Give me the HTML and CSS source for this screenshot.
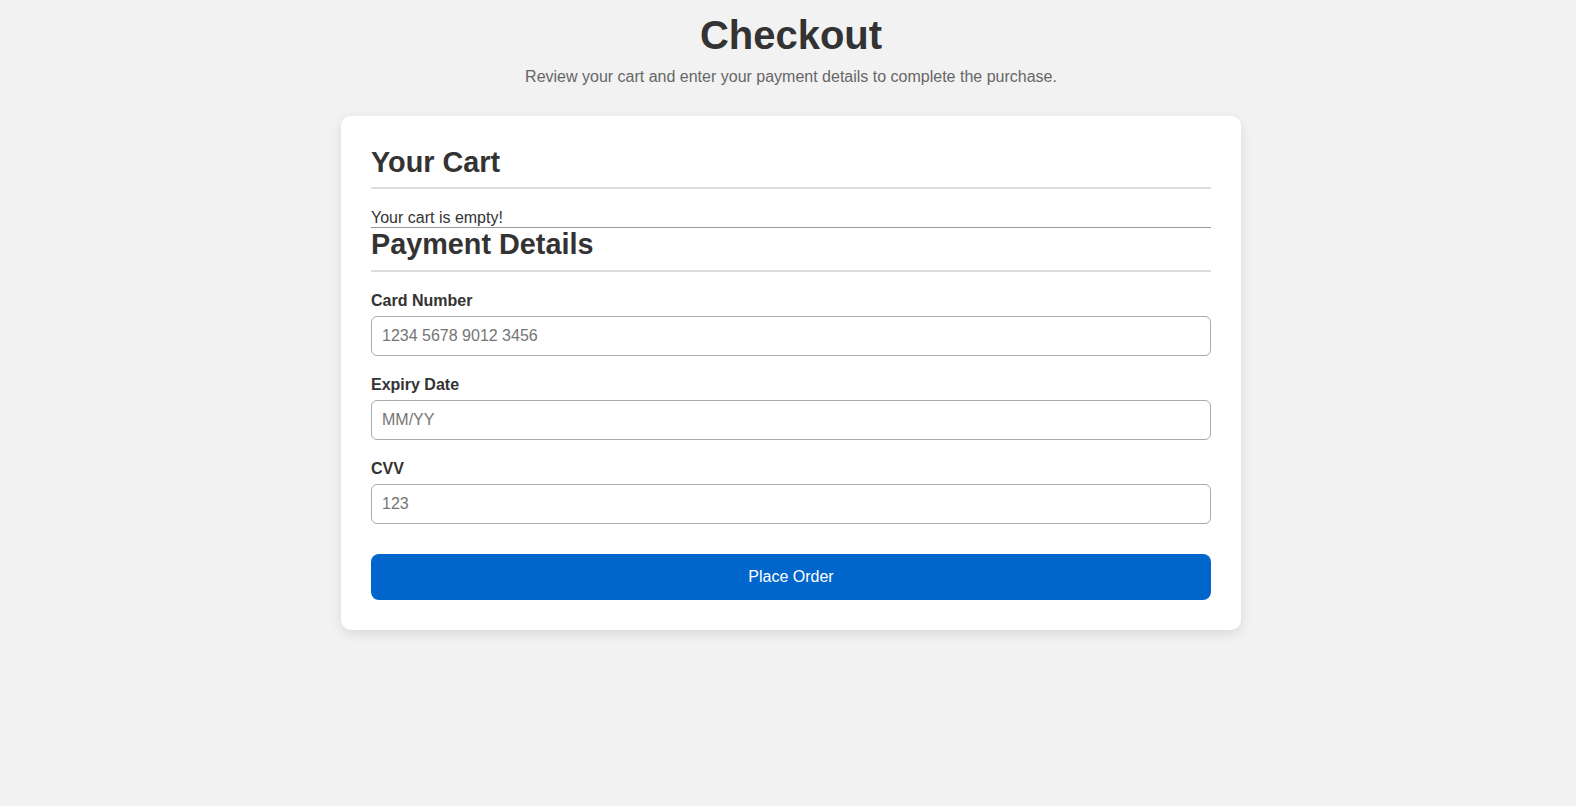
FILE: index.html
```html
<!DOCTYPE html>
<html lang="en">
<head>
<meta charset="utf-8">
<title>Checkout</title>
<link rel="stylesheet" href="styles.css">
</head>
<body>
  <header class="page-header">
    <h1 class="page-title">Checkout</h1>
    <p class="page-subtitle">Review your cart and enter your payment details to complete the purchase.</p>
  </header>
  <main class="checkout-card">
    <section class="cart">
      <h2 class="section-title cart-title">Your Cart</h2>
      <div class="cart-items">Your cart is empty!</div>
    </section>
    <section class="payment">
      <h2 class="section-title">Payment Details</h2>
      <form class="payment-form">
        <div class="form-group">
          <label class="form-label" for="card">Card Number</label>
          <input class="form-input" id="card" type="text" placeholder="1234 5678 9012 3456">
        </div>
        <div class="form-group">
          <label class="form-label" for="expiry">Expiry Date</label>
          <input class="form-input" id="expiry" type="text" placeholder="MM/YY">
        </div>
        <div class="form-group">
          <label class="form-label" for="cvv">CVV</label>
          <input class="form-input" id="cvv" type="text" placeholder="123">
        </div>
        <button class="order-button" type="button">Place Order</button>
      </form>
    </section>
  </main>
</body>
</html>
```

FILE: styles.css
```css
* {
  box-sizing: border-box;
}

html, body {
  margin: 0;
}

body {
  background: #f2f2f2;
  color: #333333;
  font-family: "Liberation Sans", Arial, sans-serif;
  font-size: 16px;
  padding: 12px 20px 20px 26px;
}

.page-header {
  text-align: center;
}

.page-title {
  margin: 0 0 10px;
  font-size: 40px;
  font-weight: bold;
  line-height: 46px;
  color: #333333;
}

.page-subtitle {
  margin: 0 0 30px;
  font-size: 16px;
  line-height: 18px;
  color: #666666;
}

.checkout-card {
  width: 900px;
  margin: 0 auto;
  background: #ffffff;
  border-radius: 10px;
  padding: 30px;
  box-shadow: 0 4px 12px rgba(0, 0, 0, 0.1);
}

.section-title {
  margin: 0 0 20px;
  font-size: 28.8px;
  font-weight: bold;
  line-height: 32px;
  padding-bottom: 10px;
  border-bottom: 2px solid #dddddd;
  color: #333333;
}

.cart-title {
  padding-bottom: 9px;
}

.cart-items {
  font-size: 16px;
  line-height: 18px;
  border-bottom: 1px solid #999999;
}

.payment-form {
  display: flex;
  flex-direction: column;
}

.form-group {
  display: flex;
  flex-direction: column;
  margin-bottom: 20px;
}

.form-label {
  font-weight: bold;
  font-size: 16px;
  line-height: 18px;
  margin-bottom: 6px;
  color: #333333;
}

.form-input {
  height: 40px;
  padding: 10px;
  font-family: "Liberation Sans", Arial, sans-serif;
  font-size: 16px;
  border: 1px solid #aaaaaa;
  border-radius: 6px;
  color: #333333;
  background: #ffffff;
}

.form-input::placeholder {
  color: #757575;
}

.order-button {
  margin-top: 10px;
  height: 46px;
  border: none;
  border-radius: 8px;
  background: #0066cc;
  color: #ffffff;
  font-family: "Liberation Sans", Arial, sans-serif;
  font-size: 16px;
  cursor: pointer;
}
```
